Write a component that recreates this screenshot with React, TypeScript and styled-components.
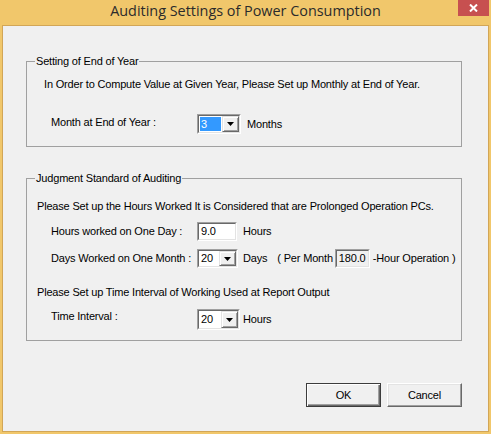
import styled, { createGlobalStyle } from "styled-components";

const GlobalStyle = createGlobalStyle`
  html, body {
    margin: 0;
    padding: 0;
  }
  body {
    background: #f1c76b;
    font-family: "Liberation Sans", Arial, sans-serif;
    font-size: 11px;
    letter-spacing: -0.18px;
    color: #000;
  }
`;

const Window = styled.div`
  width: 491px;
  height: 434px;
  display: flex;
  flex-direction: column;
  background: #f1c76b;
`;

const TitleBar = styled.div`
  height: 25px;
  display: grid;
  grid-template-columns: 1fr auto 1fr;
  align-items: start;
`;

const Title = styled.div`
  grid-column: 2;
  font-family: "Segoe UI", "Open Sans", sans-serif;
  font-size: 14.4px;
  letter-spacing: 0;
  line-height: 22px;
  color: #2b2b2b;
`;

const CloseButton = styled.div`
  grid-column: 3;
  justify-self: end;
  width: 31px;
  height: 16px;
  margin-right: 2px;
  background: #c75050;
  display: flex;
  align-items: center;
  justify-content: center;
`;

const Client = styled.div`
  flex: 1;
  margin: 0 2px 2px;
  border: 1px solid #d2a657;
  background: #f0f0f0;
  display: flex;
  flex-direction: column;
`;

const Group = styled.fieldset<{ $top: number; $bottom: number }>`
  box-sizing: border-box;
  width: 436px;
  margin: ${({ $top }) => $top}px 0 0 23px;
  padding: 0 0 ${({ $bottom }) => $bottom}px;
  border: 1px solid #a0a0a0;
  min-width: 0;
`;

const Legend = styled.legend`
  margin-left: 8px;
  padding: 0 1px;
  line-height: 13px;
`;

const Note = styled.div<{ $left: number; $top: number }>`
  margin: ${({ $top }) => $top}px 0 0 ${({ $left }) => $left}px;
  line-height: 13px;
  white-space: nowrap;
`;

const Row = styled.div<{ $top: number }>`
  display: flex;
  align-items: center;
  margin: ${({ $top }) => $top}px 0 0 24px;
  line-height: 13px;
  white-space: nowrap;
`;

const Label = styled.span<{ $top: number }>`
  width: 146px;
  align-self: flex-start;
  padding-top: ${({ $top }) => $top}px;
`;

const Unit = styled.span<{ $gap: number }>`
  margin-left: ${({ $gap }) => $gap}px;
`;

const Sunken = styled.div<{ $w: number; $h: number; $ml?: number }>`
  box-sizing: border-box;
  width: ${({ $w }) => $w}px;
  height: ${({ $h }) => $h}px;
  margin-left: ${({ $ml }) => $ml ?? 0}px;
  display: flex;
  border: 1px solid;
  border-color: #a0a0a0 #ffffff #ffffff #a0a0a0;
`;

const SunkenInner = styled.div<{ $bg?: string }>`
  flex: 1;
  display: flex;
  align-items: stretch;
  border: 1px solid;
  border-color: #696969 #e3e3e3 #e3e3e3 #696969;
  background: ${({ $bg }) => $bg ?? "#ffffff"};
`;

const Value = styled.span<{ $selected?: boolean }>`
  flex: 1;
  display: flex;
  align-items: center;
  margin: 1px;
  padding-left: 1px;
  background: ${({ $selected }) => ($selected ? "#3399ff" : "transparent")};
  color: ${({ $selected }) => ($selected ? "#ffffff" : "#000000")};
`;

const DropButton = styled.span`
  box-sizing: border-box;
  width: 17px;
  display: flex;
  align-items: center;
  justify-content: center;
  background: #f0f0f0;
  border: 1px solid;
  border-color: #e3e3e3 #696969 #696969 #e3e3e3;
  box-shadow: inset 1px 1px 0 #ffffff, inset -1px -1px 0 #a0a0a0;
`;

const ButtonRow = styled.div`
  display: flex;
  justify-content: flex-end;
  gap: 6px;
  margin-top: 42px;
  padding-right: 26px;
`;

const Button = styled.div<{ $default?: boolean }>`
  box-sizing: border-box;
  width: 75px;
  height: 24px;
  display: flex;
  align-items: center;
  justify-content: center;
  background: #f0f0f0;
  border: 1px solid;
  border-color: ${({ $default }) => ($default ? "#3c3c3c" : "#ffffff #696969 #696969 #ffffff")};
  box-shadow: ${({ $default }) =>
    $default
      ? "inset 1px 1px 0 #ffffff, inset -1px -1px 0 #696969, inset -2px -2px 0 #a0a0a0"
      : "inset -1px -1px 0 #a0a0a0, inset 1px 1px 0 #e3e3e3"};
`;

function Arrow() {
  return (
    <svg width="7" height="4" viewBox="0 0 7 4">
      <polygon points="0,0 7,0 3.5,4" fill="#000" />
    </svg>
  );
}

function Combo({ w, h, value, selected }: { w: number; h: number; value: string; selected?: boolean }) {
  return (
    <Sunken $w={w} $h={h}>
      <SunkenInner>
        <Value $selected={selected}>{value}</Value>
        <DropButton>
          <Arrow />
        </DropButton>
      </SunkenInner>
    </Sunken>
  );
}

function TextBox({ w, h, value, bg, ml }: { w: number; h: number; value: string; bg?: string; ml?: number }) {
  return (
    <Sunken $w={w} $h={h} $ml={ml}>
      <SunkenInner $bg={bg}>
        <Value>{value}</Value>
      </SunkenInner>
    </Sunken>
  );
}

export default function App() {
  return (
    <>
      <GlobalStyle />
      <Window>
        <TitleBar>
          <Title>Auditing Settings of Power Consumption</Title>
          <CloseButton>
            <svg width="9" height="8" viewBox="0 0 9 8">
              <path d="M1 0.5 L8 7.5 M8 0.5 L1 7.5" stroke="#fff" strokeWidth="2" />
            </svg>
          </CloseButton>
        </TitleBar>
        <Client>
          <Group $top={29} $bottom={12}>
            <Legend>Setting of End of Year</Legend>
            <Note $left={17} $top={10}>
              In Order to Compute Value at Given Year, Please Set up Monthly at End of Year.
            </Note>
            <Row $top={23}>
              <Label $top={2}>Month at End of Year :</Label>
              <Combo w={44} h={20} value="3" selected />
              <Unit $gap={6}>Months</Unit>
            </Row>
          </Group>

          <Group $top={25} $bottom={10}>
            <Legend>Judgment Standard of Auditing</Legend>
            <Note $left={10} $top={15}>
              Please Set up the Hours Worked It is Considered that are Prolonged Operation PCs.
            </Note>
            <Row $top={9}>
              <Label $top={3}>Hours worked on One Day :</Label>
              <TextBox w={40} h={19} value="9.0" />
              <Unit $gap={6}>Hours</Unit>
            </Row>
            <Row $top={8}>
              <Label $top={3}>Days Worked on One Month :</Label>
              <Combo w={41} h={19} value="20" />
              <Unit $gap={5}>Days</Unit>
              <Unit $gap={10}>( Per Month</Unit>
              <TextBox w={35} h={19} value="180.0" bg="#f0f0f0" ml={2} />
              <Unit $gap={3}>-Hour Operation )</Unit>
            </Row>
            <Note $left={10} $top={18}>
              Please Set up Time Interval of Working Used at Report Output
            </Note>
            <Row $top={10}>
              <Label $top={1}>Time Interval :</Label>
              <Combo w={43} h={21} value="20" />
              <Unit $gap={3}>Hours</Unit>
            </Row>
          </Group>

          <ButtonRow>
            <Button $default>OK</Button>
            <Button>Cancel</Button>
          </ButtonRow>
        </Client>
      </Window>
    </>
  );
}
